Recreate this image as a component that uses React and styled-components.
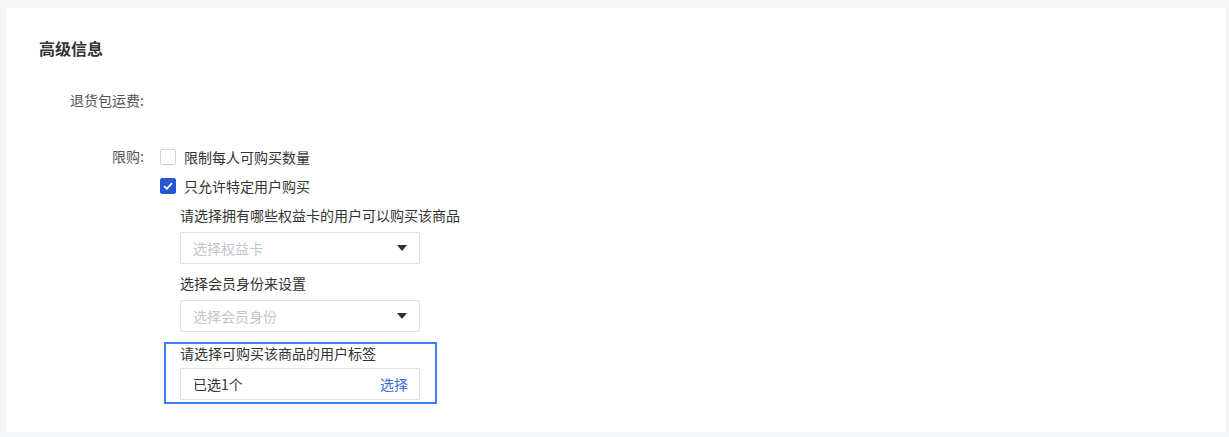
import React from "react";
import styled, { createGlobalStyle } from "styled-components";

const GlobalStyle = createGlobalStyle`
  html, body {
    margin: 0;
    padding: 0;
    background: #f5f6f8;
    font-family: "Noto Sans CJK SC", "Noto Sans", "Liberation Sans", sans-serif;
  }
`;

const Page = styled.div`
  width: 1229px;
  height: 437px;
  padding: 8px 3px 5px 6px;
  box-sizing: border-box;
`;

const Card = styled.section`
  height: 100%;
  box-sizing: border-box;
  background: #fff;
  border-radius: 4px;
  padding: 28px 33px;
`;

const Title = styled.h2`
  margin: 0;
  font-size: 16px;
  line-height: 24px;
  font-weight: 600;
  color: #333;
`;

const FormRow = styled.div`
  display: flex;
  align-items: flex-start;
  margin-top: ${(p) => p.$top || 0}px;
`;

const Label = styled.div`
  width: 121px;
  flex: none;
  box-sizing: border-box;
  padding-right: 16px;
  text-align: right;
  font-size: 14px;
  line-height: ${(p) => p.$lh || 32}px;
  color: #555;
`;

const Content = styled.div`
  display: flex;
  flex-direction: column;
`;

const CheckRow = styled.label`
  display: flex;
  align-items: center;
  gap: 8px;
  height: 29px;
  font-size: 14px;
  color: #333;
`;

const Box = styled.span`
  width: 16px;
  height: 16px;
  box-sizing: border-box;
  border-radius: 2px;
  border: 1px solid ${(p) => (p.$checked ? "#2b57d6" : "#d0d3d9")};
  background: ${(p) => (p.$checked ? "#2b57d6" : "#fff")};
  display: flex;
  align-items: center;
  justify-content: center;
`;

const Sub = styled.div`
  display: flex;
  flex-direction: column;
  margin-left: 20px;
  margin-top: 4px;
`;

const Hint = styled.div`
  font-size: 14px;
  line-height: 22px;
  color: #333;
  margin-top: ${(p) => p.$top || 0}px;
`;

const Select = styled.div`
  width: 240px;
  height: 32px;
  box-sizing: border-box;
  margin-top: 6px;
  border: 1px solid #dcdfe6;
  border-radius: 2px;
  padding: 0 11px 0 12px;
  display: flex;
  align-items: center;
  justify-content: space-between;
  font-size: 14px;
  color: ${(p) => (p.$placeholder ? "#c3c6cc" : "#333")};
`;

const Arrow = styled.span`
  width: 0;
  height: 0;
  border-left: 5px solid transparent;
  border-right: 5px solid transparent;
  border-top: 6px solid #2f2f2f;
  margin-right: 1px;
`;

const Highlight = styled.div`
  margin: 10px 0 0 -16px;
  width: 273px;
  box-sizing: border-box;
  border: 2px solid #3d7ef5;
  padding: 0 15px 2px 14px;
`;

const HighlightHint = styled.div`
  font-size: 14px;
  line-height: 18px;
  color: #333;
`;

const LinkText = styled.span`
  color: #3a6fd8;
  cursor: pointer;
`;

function Check({ checked }) {
  return (
    <Box $checked={checked}>
      {checked && (
        <svg width="10" height="8" viewBox="0 0 10 8">
          <path d="M1 4.2 L3.8 6.8 L9 1.2" fill="none" stroke="#fff" strokeWidth="1.8" />
        </svg>
      )}
    </Box>
  );
}

export default function App() {
  return (
    <>
      <GlobalStyle />
      <Page>
        <Card>
          <Title>高级信息</Title>

          <FormRow $top={24}>
            <Label>退货包运费:</Label>
          </FormRow>

          <FormRow $top={26}>
            <Label $lh={29}>限购:</Label>
            <Content>
              <CheckRow>
                <Check />
                限制每人可购买数量
              </CheckRow>
              <CheckRow>
                <Check checked />
                只允许特定用户购买
              </CheckRow>
              <Sub>
                <Hint>请选择拥有哪些权益卡的用户可以购买该商品</Hint>
                <Select $placeholder>
                  选择权益卡
                  <Arrow />
                </Select>
                <Hint $top={8}>选择会员身份来设置</Hint>
                <Select $placeholder>
                  选择会员身份
                  <Arrow />
                </Select>
                <Highlight>
                  <HighlightHint>请选择可购买该商品的用户标签</HighlightHint>
                  <Select>
                    已选1个
                    <LinkText>选择</LinkText>
                  </Select>
                </Highlight>
              </Sub>
            </Content>
          </FormRow>
        </Card>
      </Page>
    </>
  );
}
